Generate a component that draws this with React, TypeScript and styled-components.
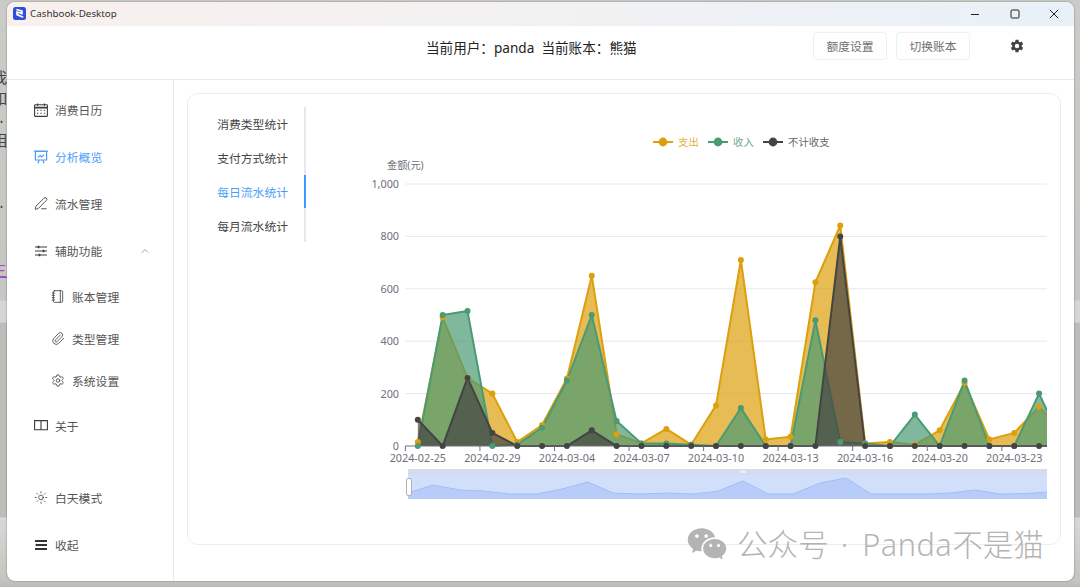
import React from 'react';
import styled, { createGlobalStyle } from 'styled-components';
import {
    ChevronUp,
    Notebook,
    Paperclip,
    PenLine,
    Settings,
    Sun
} from 'lucide-react';
import { IoSettingsSharp } from 'react-icons/io5';
import { RiWechatFill } from 'react-icons/ri';

const FONT = '"Noto Sans", "Noto Sans CJK SC", sans-serif';

const GlobalStyle = createGlobalStyle`
    html, body {
        margin: 0;
        padding: 0;
        overflow: hidden;
    }
    body {
        font-family: ${FONT};
        color: #333;
    }
`;

const Desktop = styled.div`
    position: relative;
    width: 1080px;
    height: 587px;
    box-sizing: border-box;
    padding: 2px 6px 6px 7px;
    overflow: hidden;
    background: linear-gradient(
        180deg,
        #cbcbc8 0,
        #c6c6c3 300px,
        #d6d6d4 301px,
        #d6d6d4 322px,
        #bdbdba 323px,
        #bdbdba 517px,
        #d8d8d6 518px,
        #c4c4c0 581px,
        #b9b9b5 587px
    );
`;

const BehindGlyph = styled.span<{ $top: number; $left?: number; $size?: number; $color?: string; $underline?: boolean }>`
    position: absolute;
    left: ${({ $left }) => ($left === undefined ? -8 : $left)}px;
    top: ${({ $top }) => $top}px;
    font-size: ${({ $size }) => $size || 15}px;
    line-height: 20px;
    color: ${({ $color }) => $color || '#444'};
    text-decoration: ${({ $underline }) => ($underline ? 'underline' : 'none')};
`;

const Window = styled.div`
    position: relative;
    height: 100%;
    display: flex;
    flex-direction: column;
    background: #fff;
    border-radius: 8px;
    overflow: hidden;
    box-shadow: 0 0 2px rgba(0, 0, 0, 0.45);
`;

const TitleBar = styled.div`
    flex: 0 0 24px;
    box-sizing: border-box;
    display: flex;
    align-items: center;
    padding: 0 0 1px 6px;
    background: linear-gradient(90deg, #f8f0ed 0%, #f3f1f2 45%, #e8f1f8 100%);
`;

const AppName = styled.span`
    margin-left: 4px;
    font-size: 9.8px;
    color: #333;
`;

const WindowControls = styled.div`
    margin-left: auto;
    display: flex;
`;

const WindowButton = styled.div`
    width: 39.5px;
    height: 22px;
    display: flex;
    align-items: center;
    justify-content: center;
    color: #222;
`;

const Header = styled.header`
    flex: 0 0 54px;
    box-sizing: border-box;
    display: flex;
    align-items: center;
    padding: 0 19px 14px 419px;
    border-bottom: 1px solid #e8e9ec;
`;

const CurrentInfo = styled.div`
    margin-top: 4px;
    font-size: 13.6px;
    line-height: 20px;
    color: #222;
    white-space: pre;
`;

const HeaderActions = styled.div`
    margin-left: auto;
    display: flex;
    align-items: center;
    gap: 9px;
`;

const HeaderButton = styled.div`
    width: 74px;
    height: 28px;
    box-sizing: border-box;
    display: flex;
    align-items: center;
    justify-content: center;
    border: 1px solid #eeeff1;
    border-radius: 4px;
    font-size: 11.8px;
    color: #707070;
`;

const GearButton = styled.div`
    width: 76px;
    display: flex;
    justify-content: center;
    color: #444;
`;

const Body = styled.div`
    flex: 1;
    min-height: 0;
    display: flex;
`;

const Sidebar = styled.nav`
    flex: 0 0 167px;
    box-sizing: border-box;
    display: flex;
    flex-direction: column;
    padding: 6px 0 13px;
    border-right: 1px solid #e8e9ec;
`;

const NavItem = styled.div<{ $active?: boolean }>`
    height: 47px;
    display: flex;
    align-items: center;
    gap: 7px;
    padding-left: 27px;
    padding-right: 22px;
    font-size: 11.8px;
    color: ${({ $active }) => ($active ? '#4d9df8' : '#555')};
`;

const NavIcon = styled.span<{ $active?: boolean }>`
    width: 14px;
    height: 14px;
    display: flex;
    align-items: center;
    justify-content: center;
    color: ${({ $active }) => ($active ? '#4d9df8' : '#3c3c3c')};
`;

const NavChevron = styled.span`
    margin-left: auto;
    display: flex;
    color: #777;
`;

const SubList = styled.div`
    padding-top: 1.5px;
`;

const SubItem = styled(NavItem)`
    height: 42px;
    padding-left: 44px;
`;

const SidebarBottom = styled.div`
    margin-top: auto;
`;

const Content = styled.main`
    flex: 1;
    min-width: 0;
    box-sizing: border-box;
    padding: 13px 13px 36px;
`;

const Card = styled.section`
    height: 100%;
    box-sizing: border-box;
    display: flex;
    align-items: flex-start;
    border: 1px solid #ebecef;
    border-radius: 11px;
`;

const Tabs = styled.div`
    flex: 0 0 118px;
    box-sizing: border-box;
    margin-top: 13px;
    border-right: 2px solid #e6e8ec;
`;

const Tab = styled.div<{ $active?: boolean }>`
    position: relative;
    height: 33.75px;
    display: flex;
    align-items: center;
    justify-content: flex-end;
    padding-right: 16px;
    font-size: 11.8px;
    color: ${({ $active }) => ($active ? '#4d9df8' : '#444')};

    &::after {
        content: '';
        display: ${({ $active }) => ($active ? 'block' : 'none')};
        position: absolute;
        top: 0;
        bottom: 0;
        right: -2px;
        width: 2px;
        background: #4096ff;
    }
`;

const ChartSvg = styled.svg`
    display: block;
    flex: 0 0 754px;
    text {
        font-family: ${FONT};
    }
`;

const Watermark = styled.div`
    position: absolute;
    left: 679px;
    top: 521px;
    display: flex;
    align-items: center;
    font-size: 30.6px;
    font-weight: 300;
    line-height: 36px;
    color: #b4b4b4;
    white-space: nowrap;
`;

const WatermarkIcon = styled.span`
    display: flex;
    margin-right: 9px;
`;

const WatermarkDot = styled.span`
    margin: 0 14px 0 12px;
`;

const WatermarkLatin = styled.span`
    letter-spacing: 0.5px;
`;

interface ISeries {
    name: string;
    color: string;
    legendX: number;
    values: number[];
}

const SERIES: ISeries[] = [
    {
        name: '支出',
        color: '#dd9f0c',
        legendX: 653,
        values: [15, 490, 260, 200, 15, 80, 258, 650, 45, 10, 65, 5, 155, 710, 25, 35, 625, 842, 10, 15, 5, 60, 240, 25, 50, 150, 50]
    },
    {
        name: '收入',
        color: '#4a9a73',
        legendX: 708,
        values: [0, 500, 515, 0, 5, 70, 250, 500, 95, 10, 10, 5, 0, 145, 0, 0, 480, 15, 10, 0, 120, 0, 250, 0, 0, 200, 0]
    },
    {
        name: '不计收支',
        color: '#444444',
        legendX: 763,
        values: [100, 0, 260, 50, 0, 0, 0, 60, 0, 0, 0, 0, 0, 0, 0, 0, 0, 800, 0, 0, 0, 0, 0, 0, 0, 0, 0]
    }
];

const BAND = 24.85;
const PLOT_LEFT = 405.4;
const PLOT_RIGHT = 1047;
const BASE_Y = 446;
const Y_SCALE = 0.262;

const DATE_LABELS = ['2024-02-25', '2024-02-29', '2024-03-04', '2024-03-07', '2024-03-10', '2024-03-13', '2024-03-16', '2024-03-20', '2024-03-23'];

const MINI_POINTS: [number, number][] = [
    [408, 493], [433, 485], [460, 490], [483, 491], [510, 494], [537, 494], [562, 489], [588, 482],
    [613, 493], [640, 494], [667, 493], [692, 494], [717, 491.5], [743, 481], [768, 494], [793, 494],
    [820, 483], [846, 478], [871, 494], [900, 494], [927, 494], [950, 493], [975, 490], [1000, 494],
    [1027, 493.5], [1047, 492]
];

const px = (i: number) => PLOT_LEFT + BAND * (i + 0.5);
const py = (v: number) => BASE_Y - v * Y_SCALE;

const CalendarIcon = () => (
    <svg width="14" height="14" viewBox="0 0 14 14" fill="none" stroke="currentColor" strokeWidth="1.1">
        <rect x="0.6" y="1.8" width="12.8" height="11.6" rx="0.6" />
        <path d="M0.6 4.6h12.8" strokeWidth="1.6" />
        <path d="M3.6 0.5v2.4M10.4 0.5v2.4" />
        <path d="M3 7.3h1.3M6.4 7.3h1.3M9.8 7.3h1.3M3 10.3h1.3M6.4 10.3h1.3M9.8 10.3h1.3" strokeWidth="1.1" />
    </svg>
);

const BoardIcon = () => (
    <svg width="14" height="14" viewBox="0 0 14 14" fill="none" stroke="currentColor" strokeWidth="1.2">
        <path d="M0.2 1.2h13.6" strokeWidth="1.5" />
        <path d="M1.4 1.2v8.8h11.2V1.2" />
        <path d="M4 7.6l2-2 1.6 1.4 2.4-2.4" />
        <path d="M5 10l-1 3.4M9 10l1 3.4" />
    </svg>
);

const BookIcon = () => (
    <svg width="14" height="14" viewBox="0 0 14 14" fill="none" stroke="currentColor" strokeWidth="1.1">
        <path d="M7 2.6H0.6v9.2H7zM7 2.6h6.4v9.2H7z" />
    </svg>
);

const SlidersIcon = () => (
    <svg width="14" height="14" viewBox="0 0 14 14" fill="none" stroke="currentColor" strokeWidth="1.2">
        <path d="M1 3h12M1 7h12M1 11h12" />
        <path d="M4.5 1.7v2.6M9.5 5.7v2.6M5.5 9.7v2.6" strokeWidth="1.8" />
    </svg>
);

const CollapseIcon = () => (
    <svg width="14" height="14" viewBox="0 0 14 14" fill="#333">
        <rect x="1" y="2" width="12" height="2" />
        <rect x="3" y="6" width="10" height="2" />
        <rect x="1" y="10" width="12" height="2" />
        <path d="M1 7l2-1.4v2.8z" />
    </svg>
);

const AppLogo = () => (
    <svg width="13" height="13" viewBox="0 0 13 13">
        <rect width="13" height="13" rx="2.5" fill="#2f4fd8" />
        <path d="M3.4 2.6l5.6 1.6v2.4L4 5v2.6l5.6 2.4v.6" fill="none" stroke="#fff" strokeWidth="1.6" />
    </svg>
);

const TrendChart: React.FC = () => {
    return (
        <ChartSvg width="754" height="450" viewBox="306 94 754 450">
            <defs>
                <clipPath id="plot">
                    <rect x={PLOT_LEFT} y="170" width={PLOT_RIGHT - PLOT_LEFT} height="280" />
                </clipPath>
            </defs>

            {SERIES.map((s) => (
                <g key={s.name}>
                    <line x1={s.legendX} x2={s.legendX + 20} y1="142" y2="142" stroke={s.color} strokeWidth="2" />
                    <circle cx={s.legendX + 10} cy="142" r="4.4" fill={s.color} />
                    <text x={s.legendX + 25} y="146" fontSize="10.4" fill={s.color} fillOpacity="0.85">
                        {s.name}
                    </text>
                </g>
            ))}

            <text x="387" y="169" fontSize="10.2" fill="#6e7079">金额(元)</text>

            {[0, 200, 400, 600, 800, 1000].map((v) => (
                <g key={v}>
                    {v > 0 && <line x1={PLOT_LEFT} x2={PLOT_RIGHT} y1={py(v)} y2={py(v)} stroke="#e3e8f3" strokeWidth="1" />}
                    <text x="399" y={py(v) + 4} fontSize="10.8" fill="#6e7079" textAnchor="end">
                        {v === 1000 ? '1,000' : v}
                    </text>
                </g>
            ))}

            <g clipPath="url(#plot)">
                {SERIES.map((s) => {
                    const line = s.values.map((v, i) => `${px(i)},${py(v)}`).join(' ');
                    const area = `${px(0)},${BASE_Y} ${line} ${px(s.values.length - 1)},${BASE_Y}`;
                    return (
                        <g key={s.name}>
                            <polygon points={area} fill={s.color} fillOpacity="0.7" />
                            <polyline points={line} fill="none" stroke={s.color} strokeWidth="2" strokeLinejoin="round" />
                        </g>
                    );
                })}
            </g>

            <line x1={PLOT_LEFT} x2={PLOT_RIGHT} y1={BASE_Y} y2={BASE_Y} stroke="#6e7079" strokeWidth="1" />
            {Array.from({ length: 9 }).map((_, i) => (
                <line
                    key={i}
                    x1={PLOT_LEFT + BAND * 3 * i}
                    x2={PLOT_LEFT + BAND * 3 * i}
                    y1={BASE_Y}
                    y2={BASE_Y + 5}
                    stroke="#6e7079"
                    strokeWidth="1"
                />
            ))}

            {SERIES.map((s) =>
                s.values.slice(0, 26).map((v, i) => (
                    <circle key={`${s.name}-${i}`} cx={px(i)} cy={py(v)} r="3" fill={s.color} />
                ))
            )}

            {DATE_LABELS.map((d, i) => (
                <text key={d} x={px(i * 3)} y="461.5" fontSize="10.8" fill="#6e7079" textAnchor="middle">
                    {d}
                </text>
            ))}

            <rect x="408" y="469" width="639" height="30" fill="#d2dffb" />
            <rect x="408" y="469" width="639" height="6" fill="#d3dbee" />
            <polygon
                points={`408,499 ${MINI_POINTS.map((p) => p.join(',')).join(' ')} 1047,499`}
                fill="#b7ccf9"
            />
            <polyline
                points={MINI_POINTS.map((p) => p.join(',')).join(' ')}
                fill="none"
                stroke="#a3bdf6"
                strokeWidth="1"
            />
            <path d="M741 470.5v2.5M743 470.5v2.5M745 470.5v2.5" stroke="#fff" strokeWidth="1" />
            <rect x="406.5" y="478.5" width="5" height="17" rx="1.5" fill="#fff" stroke="#aab2c4" strokeWidth="1" />
        </ChartSvg>
    );
};

const App: React.FC = () => {
    return (
        <Desktop>
            <GlobalStyle />
            <BehindGlyph $top={67}>我</BehindGlyph>
            <BehindGlyph $top={88}>如</BehindGlyph>
            <BehindGlyph $top={112} $left={0} $size={8}>•</BehindGlyph>
            <BehindGlyph $top={130}>相</BehindGlyph>
            <BehindGlyph $top={197} $left={0} $size={8}>•</BehindGlyph>
            <BehindGlyph $top={260} $color="#a34fc4" $underline>三</BehindGlyph>
            <Window>
                <TitleBar>
                    <AppLogo />
                    <AppName>Cashbook-Desktop</AppName>
                    <WindowControls>
                        <WindowButton>
                            <svg width="10" height="10" viewBox="0 0 10 10" stroke="currentColor" strokeWidth="1" fill="none">
                                <path d="M1 5.5h8" />
                            </svg>
                        </WindowButton>
                        <WindowButton>
                            <svg width="10" height="10" viewBox="0 0 10 10" stroke="currentColor" strokeWidth="1" fill="none">
                                <rect x="1" y="1" width="8" height="8" rx="1" />
                            </svg>
                        </WindowButton>
                        <WindowButton>
                            <svg width="10" height="10" viewBox="0 0 10 10" stroke="currentColor" strokeWidth="1" fill="none">
                                <path d="M.8.8l8.4 8.4M9.2.8L.8 9.2" />
                            </svg>
                        </WindowButton>
                    </WindowControls>
                </TitleBar>

                <Header>
                    <CurrentInfo>当前用户：panda  当前账本：熊猫</CurrentInfo>
                    <HeaderActions>
                        <HeaderButton>额度设置</HeaderButton>
                        <HeaderButton>切换账本</HeaderButton>
                        <GearButton>
                            <IoSettingsSharp size={14} />
                        </GearButton>
                    </HeaderActions>
                </Header>

                <Body>
                    <Sidebar>
                        <NavItem>
                            <NavIcon><CalendarIcon /></NavIcon>
                            消费日历
                        </NavItem>
                        <NavItem $active>
                            <NavIcon $active><BoardIcon /></NavIcon>
                            分析概览
                        </NavItem>
                        <NavItem>
                            <NavIcon><PenLine size={15} strokeWidth={1.5} /></NavIcon>
                            流水管理
                        </NavItem>
                        <NavItem>
                            <NavIcon><SlidersIcon /></NavIcon>
                            辅助功能
                            <NavChevron><ChevronUp size={12} strokeWidth={1.3} /></NavChevron>
                        </NavItem>
                        <SubList>
                            <SubItem>
                                <NavIcon><Notebook size={15} strokeWidth={1.4} /></NavIcon>
                                账本管理
                            </SubItem>
                            <SubItem>
                                <NavIcon><Paperclip size={15} strokeWidth={1.4} /></NavIcon>
                                类型管理
                            </SubItem>
                            <SubItem>
                                <NavIcon><Settings size={15} strokeWidth={1.4} /></NavIcon>
                                系统设置
                            </SubItem>
                        </SubList>
                        <NavItem>
                            <NavIcon><BookIcon /></NavIcon>
                            关于
                        </NavItem>
                        <SidebarBottom>
                            <NavItem>
                                <NavIcon><Sun size={15} strokeWidth={1.3} /></NavIcon>
                                白天模式
                            </NavItem>
                            <NavItem>
                                <NavIcon><CollapseIcon /></NavIcon>
                                收起
                            </NavItem>
                        </SidebarBottom>
                    </Sidebar>

                    <Content>
                        <Card>
                            <Tabs>
                                <Tab>消费类型统计</Tab>
                                <Tab>支付方式统计</Tab>
                                <Tab $active>每日流水统计</Tab>
                                <Tab>每月流水统计</Tab>
                            </Tabs>
                            <TrendChart />
                        </Card>
                    </Content>
                </Body>

                <Watermark>
                    <WatermarkIcon><RiWechatFill size={42} /></WatermarkIcon>
                    公众号<WatermarkDot>·</WatermarkDot><WatermarkLatin>Panda</WatermarkLatin>不是猫
                </Watermark>
            </Window>
        </Desktop>
    );
};

export default App;
